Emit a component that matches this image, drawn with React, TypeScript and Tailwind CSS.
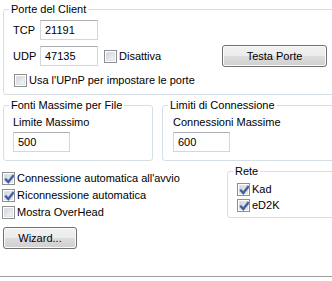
import React from "react";

function CheckBox({ checked }: { checked?: boolean }) {
  return (
    <span className="relative inline-flex h-[13px] w-[13px] shrink-0 border border-[#8e8f8f] bg-white p-px">
      <span className="block h-full w-full bg-[linear-gradient(135deg,#cbcfd5_0%,#e6e8eb_55%,#f7f7f7_100%)] shadow-[inset_0_0_0_1px_#dfe2e6]" />
      {checked && (
        <svg className="absolute left-[1px] top-[1px]" width="11" height="11" viewBox="0 0 11 11">
          <path d="M2 5.5 L4.3 8 L9 2" fill="none" stroke="#8fa3cc" strokeWidth="3" strokeLinecap="square" />
          <path d="M2 5.5 L4.3 8 L9 2" fill="none" stroke="#3e5899" strokeWidth="1.8" strokeLinecap="square" />
        </svg>
      )}
    </span>
  );
}

function TextBox({ value, w }: { value: string; w: string }) {
  return (
    <div
      className={`${w} flex h-[20px] shrink-0 items-center border border-[#d3d6dc] border-t-[#abadb3] bg-white pl-[4px] text-black`}
    >
      {value}
    </div>
  );
}

function Button({ label, w }: { label: string; w: string }) {
  return (
    <div
      className={`${w} flex h-[22px] shrink-0 items-center justify-center rounded-[3px] border border-[#707070] bg-[linear-gradient(#f2f2f2_0%,#ebebeb_50%,#dddddd_50%,#cfcfcf_100%)] text-black shadow-[inset_0_0_0_1px_#fbfbfb]`}
    >
      {label}
    </div>
  );
}

export default function App() {
  return (
    <div
      className="relative flex h-[281px] w-[332px] flex-col overflow-hidden bg-white text-[11px] leading-[13px] text-black"
      style={{ fontFamily: '"Liberation Sans", Arial, sans-serif' }}
    >
      {/* Porte del Client */}
      <fieldset className="ml-[3px] mt-[3px] w-[345px] shrink-0 rounded-[3px] border border-[#d5dfe5] pb-[7px] pl-0 pt-[4px]">
        <legend className="ml-[5px] px-[2px]">Porte del Client</legend>
        <div className="flex h-[20px] items-center">
          <span className="w-[36px] shrink-0 pl-[9px]">TCP</span>
          <TextBox value="21191" w="w-[58px]" />
        </div>
        <div className="mt-[5px] flex h-[22px] items-center">
          <span className="w-[36px] shrink-0 pl-[9px]">UDP</span>
          <TextBox value="47135" w="w-[58px]" />
          <div className="ml-[6px] flex w-[118px] shrink-0 items-center">
            <CheckBox />
            <span className="ml-[2px]">Disattiva</span>
          </div>
          <Button label="Testa Porte" w="w-[105px]" />
        </div>
        <div className="mt-[7px] flex h-[13px] items-center pl-[10px]">
          <CheckBox />
          <span className="ml-[2px] whitespace-nowrap">Usa l'UPnP per impostare le porte</span>
        </div>
      </fieldset>

      {/* Fonti / Limiti */}
      <div className="mt-[4px] flex shrink-0">
        <fieldset className="ml-[3px] w-[150px] shrink-0 rounded-[3px] border border-[#d5dfe5] pb-[8px] pl-[9px] pt-[4px]">
          <legend className="ml-[-4px] px-[2px]">Fonti Massime per File</legend>
          <div>Limite Massimo</div>
          <div className="mt-[3px]">
            <TextBox value="500" w="w-[57px]" />
          </div>
        </fieldset>
        <fieldset className="ml-[9px] w-[190px] shrink-0 rounded-[3px] border border-[#d5dfe5] pb-[8px] pl-[10px] pt-[4px]">
          <legend className="ml-[-5px] px-[2px]">Limiti di Connessione</legend>
          <div>Connessioni Massime</div>
          <div className="mt-[3px]">
            <TextBox value="600" w="w-[57px]" />
          </div>
        </fieldset>
      </div>

      {/* Options + Rete */}
      <div className="mt-[4px] flex shrink-0">
        <div className="w-[227px] shrink-0 pl-[2px] pt-[5px]">
          <div className="flex h-[17px] items-center">
            <CheckBox checked />
            <span className="ml-[2px] whitespace-nowrap">Connessione automatica all'avvio</span>
          </div>
          <div className="flex h-[17px] items-center">
            <CheckBox checked />
            <span className="ml-[2px]">Riconnessione automatica</span>
          </div>
          <div className="flex h-[17px] items-center">
            <CheckBox />
            <span className="ml-[2px]">Mostra OverHead</span>
          </div>
          <div className="ml-[1px] mt-[6px]">
            <Button label="Wizard..." w="w-[74px]" />
          </div>
        </div>
        <fieldset className="h-[53px] w-[130px] shrink-0 rounded-[3px] border border-[#d5dfe5] pb-[4px] pl-[9px] pt-[3px]">
          <legend className="ml-[-4px] px-[2px]">Rete</legend>
          <div className="flex h-[16px] items-center">
            <CheckBox checked />
            <span className="ml-[2px]">Kad</span>
          </div>
          <div className="flex h-[16px] items-center">
            <CheckBox checked />
            <span className="ml-[2px]">eD2K</span>
          </div>
        </fieldset>
      </div>

      <div className="mt-auto mb-[4px] h-px w-full shrink-0 bg-[#a0a0a0]" />
    </div>
  );
}
